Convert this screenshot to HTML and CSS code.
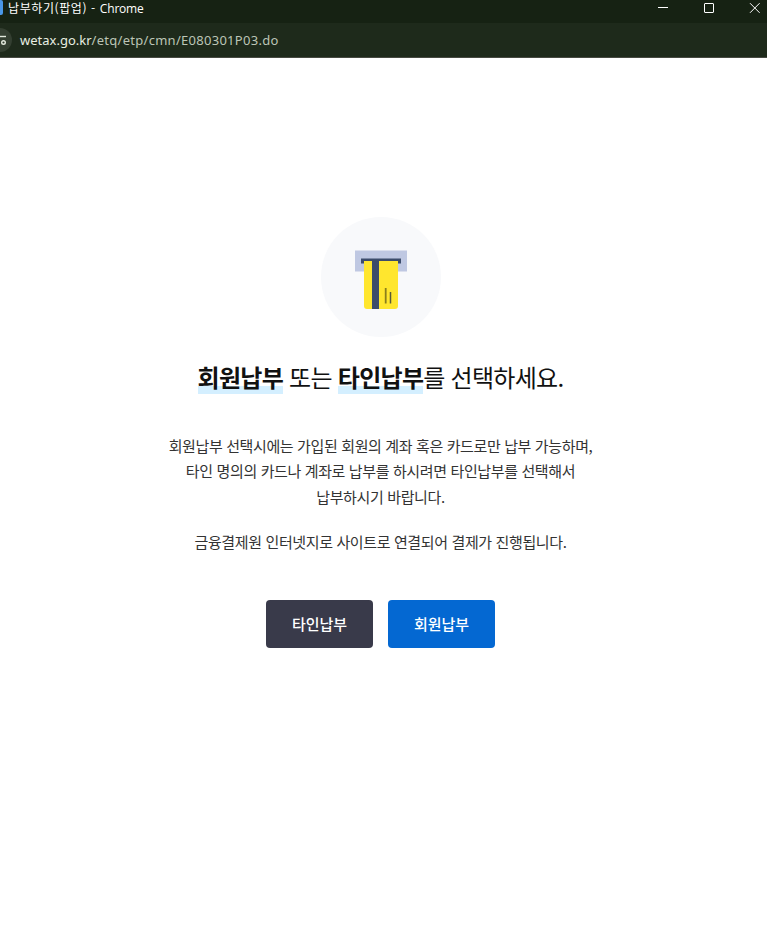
FILE: index.html
```html
<!DOCTYPE html>
<html lang="ko">
  <head>
    <meta charset="UTF-8" />
    <meta name="viewport" content="width=device-width, initial-scale=1.0" />
    <title>납부하기(팝업)</title>
    <link rel="stylesheet" href="styles.css">
  </head>
  <body>
    <header class="titlebar">
      <span class="favicon"></span>
      <span class="window-title">납부하기(팝업) - <span class="app-name">Chrome</span></span>
      <svg class="window-controls" width="110" height="23" viewBox="0 0 110 23">
        <path d="M1 7.5h10" />
        <rect x="47.5" y="3.5" width="9" height="9" rx="0.5" />
        <path d="M93 3.2l9.6 9.6M102.6 3.2L93 12.8" />
      </svg>
    </header>
    <div class="addressbar">
      <svg class="site-info" width="12" height="24" viewBox="0 0 12 24">
        <circle class="site-info-bg" cx="0" cy="12" r="12" />
        <path d="M0 8.5h6" />
        <circle cx="3.5" cy="14.5" r="1.8" />
      </svg>
      <span class="url"><b>wetax.go.kr</b>/etq/etp/cmn/E080301P03.do</span>
    </div>

    <main class="container">
      <div class="pay-icon">
        <svg width="120" height="120" viewBox="0 0 120 120">
          <rect x="34" y="33.5" width="52" height="21" fill="#bfc8e2" />
          <path d="M40 41.5h40v5h-40z" fill="#3c4c6b" />
          <path d="M43 44h34v45a3 3 0 0 1-3 3H46a3 3 0 0 1-3-3z" fill="#ffe62e" />
          <path d="M51 44h7v48h-7z" fill="#3c4c6b" />
          <path d="M64.7 71v15.5" stroke="#8a7f1c" stroke-width="1.8" />
          <path d="M69.5 75v11.5" stroke="#5a5a38" stroke-width="1.5" />
        </svg>
      </div>
      <h1><strong>회원납부</strong> 또는 <strong>타인납부</strong>를 선택하세요.</h1>
      <p>
        회원납부 선택시에는 가입된 회원의 계좌 혹은 카드로만 납부 가능하며,<br />
        타인 명의의 카드나 계좌로 납부를 하시려면 타인납부를 선택해서<br />
        납부하시기 바랍니다.
      </p>
      <p>금융결제원 인터넷지로 사이트로 연결되어 결제가 진행됩니다.</p>
      <div class="buttons">
        <button type="button" class="btn">타인납부</button>
        <button type="button" class="btn btn-primary">회원납부</button>
      </div>
    </main>
  </body>
</html>
```

FILE: styles.css
```css
body {
  margin: 0;
  background: #fff;
  color: #333;
  font-family: "Noto Sans CJK KR", sans-serif;
}
.titlebar {
  display: flex;
  height: 23px;
  background: #162213;
  color: #fff;
  font-size: 12px;
  line-height: 16px;
}
.favicon {
  width: 3px;
  height: 15px;
  background: #4a97e8;
  border-radius: 0 2px 2px 0;
}
.window-title {
  margin-left: 5px;
  letter-spacing: 0.6px;
  white-space: nowrap;
}
.app-name {
  font-family: "Open Sans", sans-serif;
  letter-spacing: -0.2px;
}
.window-controls {
  margin-left: auto;
  fill: none;
  stroke: #fff;
}
.addressbar {
  display: flex;
  align-items: center;
  box-sizing: border-box;
  height: 35px;
  background: #1e2a1b;
  border-bottom: 1px solid #474a42;
}
.site-info {
  fill: none;
  stroke: #e2e8dc;
  stroke-width: 1.4;
}
.site-info .site-info-bg {
  fill: #343f31;
  stroke: none;
}
.url {
  margin-left: 8px;
  color: #bcc5b6;
  font-family: "Noto Sans", sans-serif;
  font-size: 13px;
  line-height: 20px;
  letter-spacing: 0.28px;
}
.url b {
  color: #e8eee2;
  font-weight: 400;
  letter-spacing: 0;
}
.container {
  padding: 159px 6px 0 0;
  text-align: center;
}
.pay-icon {
  width: 120px;
  height: 120px;
  margin: 0 auto;
  background: #f8f9fb;
  border-radius: 50%;
}
h1 {
  margin: 21px 0 36.7px;
  color: #111;
  font-size: 24px;
  font-weight: 400;
  line-height: 38px;
  letter-spacing: -0.03em;
}
h1 strong {
  font-weight: 700;
  background: linear-gradient(#d4efff, #d4efff) 0 27px / 100% 8px no-repeat;
}
p {
  margin: 0 0 20px;
  font-size: 15px;
  line-height: 25.5px;
  letter-spacing: -0.025em;
}
.buttons {
  display: flex;
  justify-content: center;
  gap: 15px;
  margin-top: 45.4px;
}
.btn {
  width: 107px;
  height: 48px;
  padding: 0 0 1px;
  border: none;
  border-radius: 4px;
  background: #393a4a;
  color: #fff;
  font-family: inherit;
  font-size: 15px;
  font-weight: 500;
  cursor: pointer;
}
.btn-primary {
  background: #0468d2;
}
```
